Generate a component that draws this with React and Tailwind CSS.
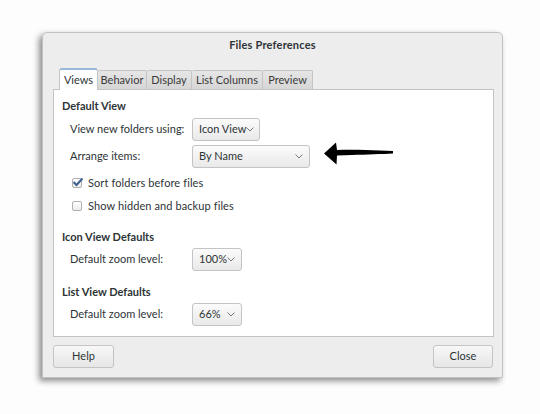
import React from 'react';

const font = { fontFamily: 'Lato, "Noto Sans", sans-serif' };

const Chevron = () => (
  <svg width="8" height="5" viewBox="0 0 8 5" className="shrink-0">
    <path d="M0.5 0.5 L4 4 L7.5 0.5" fill="none" stroke="#7a7a7a" strokeWidth="1" />
  </svg>
);

const Combo = ({ label, width }) => (
  <div
    className="h-[23px] flex items-center justify-between pl-[6px] pr-[6px] rounded-[3px] border border-[#c4c4c4] bg-gradient-to-b from-[#fbfbfb] to-[#e9e9e9] shadow-[0_1px_0_rgba(255,255,255,0.8)] text-[#2e3436] whitespace-nowrap"
    style={{ width }}
  >
    <span>{label}</span>
    <Chevron />
  </div>
);

const Row = ({ label, children }) => (
  <div className="flex items-center pl-[16px]">
    <span className="w-[122px] text-[#2e3436] whitespace-nowrap">{label}</span>
    {children}
  </div>
);

const Check = ({ checked, label }) => (
  <div className="flex items-center h-[16px] pl-[18px]">
    <div className="w-[10px] h-[10px] border border-[#b0b0b0] rounded-[2px] bg-gradient-to-b from-white to-[#ececec] relative">
      {checked && (
        <svg width="12" height="10" viewBox="0 0 12 10" className="absolute left-[-1px] top-[-2px]">
          <path d="M1.5 5 L4.5 8 L10.5 1.5" fill="none" stroke="#3b5f8f" strokeWidth="2" />
        </svg>
      )}
    </div>
    <span className="ml-[6px] text-[#2e3436] tracking-[0.1px]">{label}</span>
  </div>
);

const tabs = [
  { name: 'Views', w: 39 },
  { name: 'Behavior', w: 49 },
  { name: 'Display', w: 45 },
  { name: 'List Columns', w: 71 },
  { name: 'Preview', w: 50 },
];

export default function App() {
  return (
    <div className="w-[540px] h-[414px] bg-[#fdfdfd] relative overflow-hidden text-[11px]" style={font}>
      <div className="absolute left-[42px] top-[32px] w-[461px] h-[346px] bg-[#ededed] rounded-t-[5px] border border-[#c2c2c2] shadow-[-3px_3px_6px_rgba(0,0,0,0.45)] flex flex-col">
        <div className="h-[24px] flex items-center justify-center font-bold text-[#2e3436] pt-[1px] tracking-[0.2px]">
          Files Preferences
        </div>
        <div className="h-[11px]" />
        <div className="pl-[10px] pr-[8px]">
          <div className="flex items-end h-[21px] pl-[6px]">
            {tabs.map((t, i) =>
              i === 0 ? (
                <div
                  key={t.name}
                  className="h-[22px] -mb-px z-10 flex items-center justify-center bg-white border border-[#c4c4c4] border-b-0 border-t-[2px] border-t-[#9ab7da] rounded-t-[3px] text-[#2e3436]"
                  style={{ width: t.w }}
                >
                  {t.name}
                </div>
              ) : (
                <div
                  key={t.name}
                  className="h-[19px] flex items-center justify-center bg-gradient-to-b from-[#e6e6e6] to-[#d6d6d6] border border-[#c4c4c4] border-b-0 border-l-0 rounded-t-[2px] text-[#3a3a3a] whitespace-nowrap"
                  style={{ width: t.w }}
                >
                  {t.name}
                </div>
              )
            )}
          </div>
          <div className="h-[248px] bg-white border border-[#c4c4c4] pt-[8px] flex flex-col">
            <div className="h-[16px] flex items-center pl-[8px] font-bold text-[#2e3436]">Default View</div>
            <div className="mt-[4px]">
              <Row label="View new folders using:">
                <Combo label="Icon View" width={68} />
              </Row>
            </div>
            <div className="mt-[4px]">
              <Row label="Arrange items:">
                <Combo label="By Name" width={118} />
              </Row>
            </div>
            <div className="mt-[7px]">
              <Check checked label="Sort folders before files" />
            </div>
            <div className="mt-[7px]">
              <Check label="Show hidden and backup files" />
            </div>
            <div className="h-[16px] mt-[15px] flex items-center pl-[8px] font-bold text-[#2e3436]">Icon View Defaults</div>
            <div className="mt-[3px]">
              <Row label="Default zoom level:">
                <Combo label="100%" width={50} />
              </Row>
            </div>
            <div className="h-[16px] mt-[13px] flex items-center pl-[8px] font-bold text-[#2e3436]">List View Defaults</div>
            <div className="mt-[3px]">
              <Row label="Default zoom level:">
                <Combo label="66%" width={50} />
              </Row>
            </div>
          </div>
          <div className="flex justify-between mt-[8px] pr-[1px]">
            <button className="w-[61px] h-[23px] rounded-[3px] border border-[#c4c4c4] bg-gradient-to-b from-[#f8f8f8] to-[#e6e6e6] text-[#2e3436]">
              Help
            </button>
            <button className="w-[60px] h-[23px] rounded-[3px] border border-[#c4c4c4] bg-gradient-to-b from-[#f8f8f8] to-[#e6e6e6] text-[#2e3436]">
              Close
            </button>
          </div>
        </div>
      </div>
      <svg className="absolute left-[322px] top-[141px]" width="74" height="24" viewBox="0 0 74 24">
        <path
          d="M2 12.5 L14 1.5 L15 9 C30 8.5 45 9 58 9.5 L71 10 L71 12.5 C60 13 45 13.5 30 14 L15 14.5 L14.5 23.5 Z"
          fill="#000"
        />
      </svg>
    </div>
  );
}
